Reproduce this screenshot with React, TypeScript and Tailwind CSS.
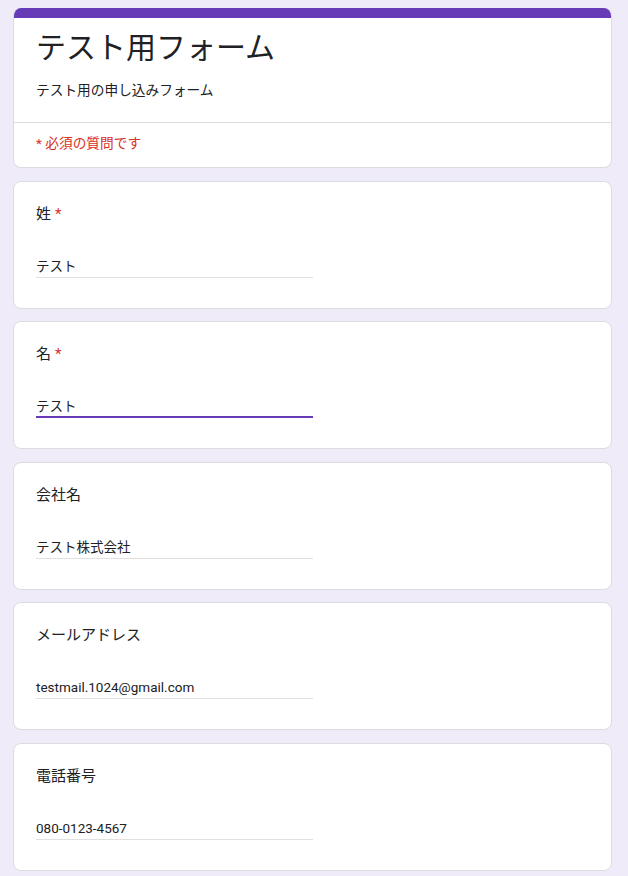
import React from 'react'

const font = '[font-family:Roboto,"Noto_Sans_CJK_JP",sans-serif]'

type Field = {
  label: string
  value: string
  required?: boolean
  focused?: boolean
}

const fields: Field[] = [
  { label: '姓', value: 'テスト', required: true },
  { label: '名', value: 'テスト', required: true, focused: true },
  { label: '会社名', value: 'テスト株式会社' },
  { label: 'メールアドレス', value: 'testmail.1024@gmail.com' },
  { label: '電話番号', value: '080-0123-4567' },
]

function QuestionCard({ field }: { field: Field }) {
  return (
    <div className="mt-[12.5px] h-[128px] rounded-lg border border-[#dadce0] bg-white pl-[22px] pr-6 pt-5">
      <div className="h-6 text-[15px] leading-6 text-[#202124]">
        {field.label}
        {field.required && <span className="ml-[4px] text-[#d93025]">*</span>}
      </div>
      <div
        className={`mt-[30px] h-[22px] w-[277px] text-[13.5px] leading-5 text-[#202124] ${
          field.focused ? 'border-b-2 border-[#673ab7]' : 'border-b border-[#e0e0e0]'
        }`}
      >
        {field.value}
      </div>
    </div>
  )
}

export default function App() {
  return (
    <div className={`min-h-screen bg-[#f0ebf8] pl-[13px] pt-2 ${font}`}>
      <div className="w-[599px]">
        <div className="overflow-hidden rounded-lg border border-t-0 border-[#dadce0] bg-white">
          <div className="h-[10px] bg-[#673ab7]" />
          <div className="px-[22px] pt-[10px] pb-[22px]">
            <h1 className="text-[30px] leading-10 text-[#202124]">テスト用フォーム</h1>
            <p className="mt-3 text-[13.7px] leading-5 text-[#202124]">テスト用の申し込みフォーム</p>
          </div>
          <div className="border-t border-[#dadce0] px-[22px] pt-[10px] pb-[14px] text-[13.7px] leading-5 text-[#d93025]">
            * 必須の質問です
          </div>
        </div>

        {fields.map((field) => (
          <QuestionCard key={field.label} field={field} />
        ))}
      </div>
    </div>
  )
}
